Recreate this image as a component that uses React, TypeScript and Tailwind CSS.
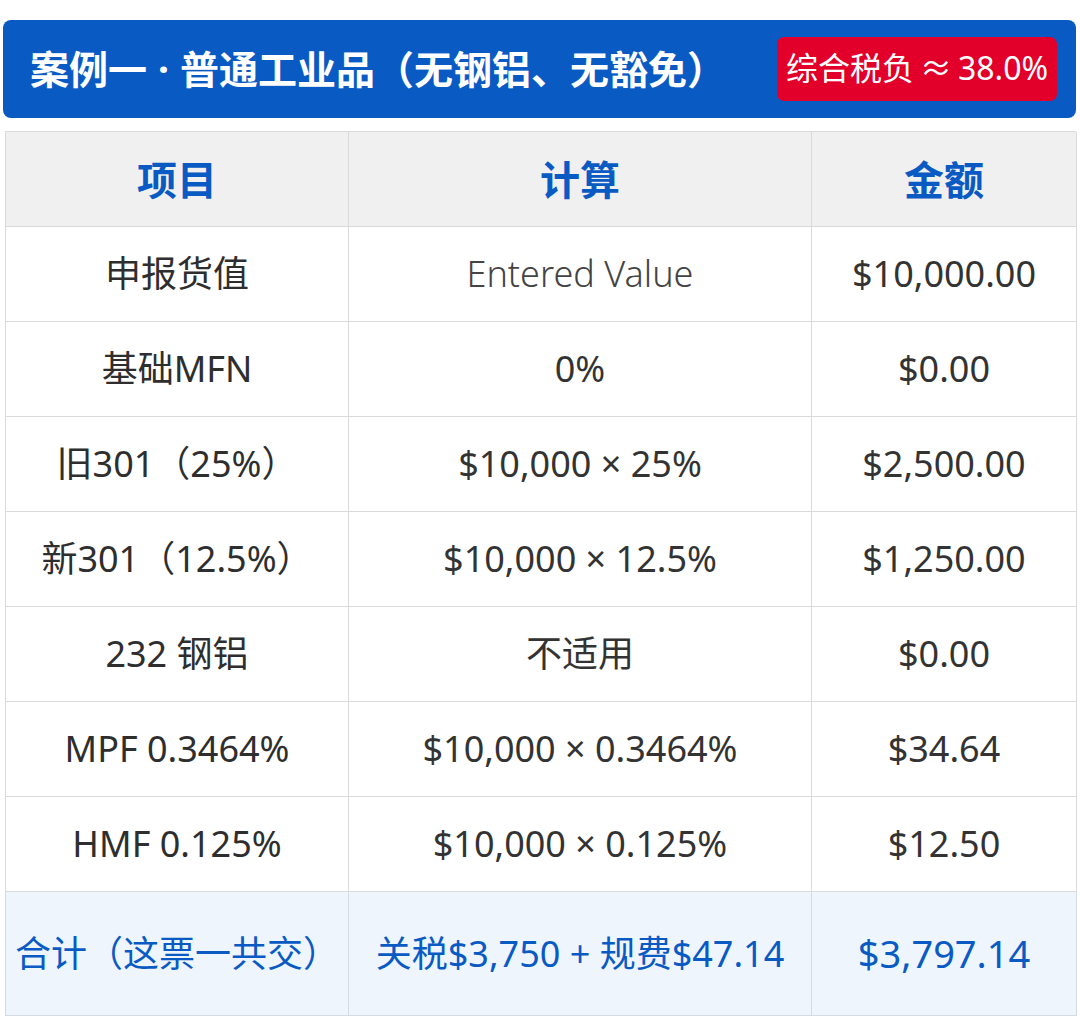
const rows = [
  { item: "申报货值", calc: "Entered Value", amount: "$10,000.00", light: true },
  { item: "基础MFN", calc: "0%", amount: "$0.00" },
  { item: "旧301（25%）", calc: "$10,000 × 25%", amount: "$2,500.00" },
  { item: "新301（12.5%）", calc: "$10,000 × 12.5%", amount: "$1,250.00" },
  { item: "232 钢铝", calc: "不适用", amount: "$0.00" },
  { item: "MPF 0.3464%", calc: "$10,000 × 0.3464%", amount: "$34.64" },
  { item: "HMF 0.125%", calc: "$10,000 × 0.125%", amount: "$12.50" },
]

const font = { fontFamily: '"Noto Sans", "Noto Sans CJK SC", sans-serif' }

const cell = "border-r border-b flex items-center justify-center whitespace-nowrap"

export default function App() {
  return (
    <div className="w-[1080px] h-[1031px] bg-white pt-[20px]" style={font}>
      <div className="ml-[3px] w-[1073px] h-[98px] rounded-[8px] bg-[#0a5ac4] flex items-center justify-between pl-[27px] pr-[19px]">
        <h1 className="text-white text-[39px] font-bold leading-none whitespace-nowrap pb-[2px]">
          案例一<span className="mx-[11px]">·</span>普通工业品（无钢铝、无豁免）
        </h1>
        <span className="bg-[#e2002b] text-white text-[32px] leading-none h-[64px] w-[280px] rounded-[7px] flex items-center justify-center whitespace-nowrap pb-[3px]">
          综合税负<span className="mx-[6px]">≈</span>38.0%
        </span>
      </div>

      <div className="mt-[13px] ml-[5px] w-[1071px] grid grid-cols-[343px_463px_265px] border-l border-t border-[#dadada]">
        <div className={`${cell} pt-[2px] h-[95px] bg-[#f0f0f0] border-[#dadada] text-[#0a5ac4] text-[40px] font-bold`}>项目</div>
        <div className={`${cell} pt-[2px] h-[95px] bg-[#f0f0f0] border-[#dadada] text-[#0a5ac4] text-[40px] font-bold`}>计算</div>
        <div className={`${cell} pt-[2px] h-[95px] bg-[#f0f0f0] border-[#dadada] text-[#0a5ac4] text-[40px] font-bold`}>金额</div>

        {rows.map((r) => (
          <div key={r.item} className="contents">
            <div className={`${cell} h-[95px] border-[#dadada] text-[#2e2e2e] text-[36px]`}>{r.item}</div>
            <div className={`${cell} h-[95px] border-[#dadada] text-[36px] ${r.light ? "text-[#444] font-light" : "text-[#333]"}`}>{r.calc}</div>
            <div className={`${cell} h-[95px] border-[#dadada] text-[#333] text-[36px]`}>{r.amount}</div>
          </div>
        ))}

        <div className={`${cell} h-[124px] bg-[#eef5fd] border-[#d6dbe2] text-[#0a5ac4] text-[36px]`}>合计（这票一共交）</div>
        <div className={`${cell} h-[124px] bg-[#eef5fd] border-[#d6dbe2] text-[#0a5ac4] text-[36px]`}>关税$3,750 + 规费$47.14</div>
        <div className={`${cell} h-[124px] bg-[#eef5fd] border-[#d6dbe2] text-[#0a5ac4] text-[38px]`}>$3,797.14</div>
      </div>
    </div>
  )
}
